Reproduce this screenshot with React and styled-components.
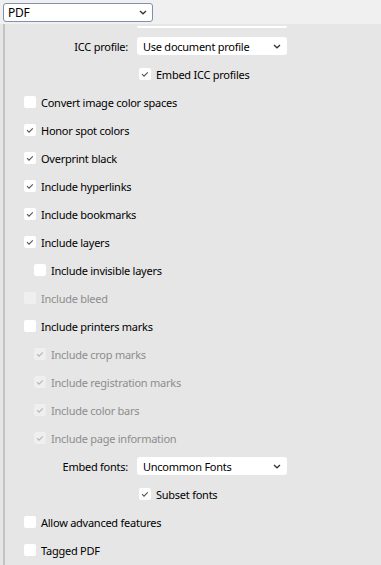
import React from "react";
import styled, { createGlobalStyle } from "styled-components";

const Global = createGlobalStyle`
  html, body {
    margin: 0;
    padding: 0;
    background: #e6e6e6;
  }
  body {
    font-family: "Noto Sans", "Open Sans", sans-serif;
    font-size: 11px;
    letter-spacing: -0.25px;
    color: #111;
  }
`;

const Page = styled.div`
  width: 381px;
  height: 565px;
  overflow: hidden;
  display: flex;
  flex-direction: column;
  background: #e6e6e6;
`;

const TopBar = styled.div`
  height: 24px;
  flex: none;
  background: #f0f0f0;
  padding: 3px 0 0 3px;
  box-sizing: border-box;
`;

const SelectBox = styled.div`
  box-sizing: border-box;
  width: ${(p) => p.$width}px;
  height: ${(p) => p.$height}px;
  background: #fff;
  border: ${(p) => (p.$outlined ? "1px solid #7f91ad" : "none")};
  border-radius: 3px;
  display: flex;
  align-items: center;
  justify-content: space-between;
  padding: 0 ${(p) => (p.$outlined ? 5 : 6)}px 0 ${(p) => (p.$outlined ? 4 : 6)}px;
  line-height: 1;
  color: #000;
  font-size: ${(p) => (p.$outlined ? 12 : 11)}px;
`;

const Panel = styled.div`
  flex: 1;
  margin-left: 3px;
  border-left: 2px solid #c3c3c3;
  padding-top: 2px;
`;

const CutOff = styled.div`
  margin-left: 132px;
  width: 150px;
  height: 2px;
  background: #fff;
  border-radius: 0 0 2px 2px;
  margin-bottom: 4px;
`;

const Row = styled.div`
  height: 28px;
  display: flex;
  align-items: center;
  padding-left: ${(p) => p.$indent}px;
  color: ${(p) => (p.$disabled ? "#8d8d8d" : "#000")};
`;

const FieldRow = styled.div`
  height: 28px;
  display: grid;
  grid-template-columns: 123px 150px;
  column-gap: 9px;
  align-items: center;
`;

const Label = styled.span`
  text-align: right;
  color: #000;
`;

const Box = styled.span`
  width: 12px;
  height: 12px;
  flex: none;
  border-radius: 2px;
  background: ${(p) => (p.$disabled ? "#efefef" : "#fff")};
  display: flex;
  align-items: center;
  justify-content: center;
  margin-right: 5px;
`;

const Chevron = () => (
  <svg width="8" height="5" viewBox="0 0 8 5">
    <polyline points="1,1 4,3.8 7,1" fill="none" stroke="#333" strokeWidth="1.3" />
  </svg>
);

const Tick = ({ color }) => (
  <svg width="12" height="12" viewBox="0 0 12 12">
    <polyline points="3,6.2 5,8.2 8.8,4.4" fill="none" stroke={color} strokeWidth="1.1" />
  </svg>
);

function Check({ label, checked, disabled, indent = 19 }) {
  return (
    <Row $indent={indent} $disabled={disabled}>
      <Box $disabled={disabled}>
        {checked && <Tick color={disabled ? "#b5b5b5" : "#555"} />}
      </Box>
      {label}
    </Row>
  );
}

function Field({ label, value }) {
  return (
    <FieldRow>
      <Label>{label}</Label>
      <SelectBox $width={150} $height={18}>
        {value}
        <Chevron />
      </SelectBox>
    </FieldRow>
  );
}

const rows = [
  { label: "Convert image color spaces" },
  { label: "Honor spot colors", checked: true },
  { label: "Overprint black", checked: true },
  { label: "Include hyperlinks", checked: true },
  { label: "Include bookmarks", checked: true },
  { label: "Include layers", checked: true },
  { label: "Include invisible layers", indent: 29 },
  { label: "Include bleed", disabled: true },
  { label: "Include printers marks" },
  { label: "Include crop marks", checked: true, disabled: true, indent: 29 },
  { label: "Include registration marks", checked: true, disabled: true, indent: 29 },
  { label: "Include color bars", checked: true, disabled: true, indent: 29 },
  { label: "Include page information", checked: true, disabled: true, indent: 29 },
];

export default function App() {
  return (
    <Page>
      <Global />
      <TopBar>
        <SelectBox $outlined $width={150} $height={19}>
          PDF
          <Chevron />
        </SelectBox>
      </TopBar>
      <Panel>
        <CutOff />
        <Field label="ICC profile:" value="Use document profile" />
        <Check label="Embed ICC profiles" checked indent={134} />
        {rows.map((r) => (
          <Check key={r.label} {...r} />
        ))}
        <Field label="Embed fonts:" value="Uncommon Fonts" />
        <Check label="Subset fonts" checked indent={134} />
        <Check label="Allow advanced features" />
        <Check label="Tagged PDF" />
      </Panel>
    </Page>
  );
}
